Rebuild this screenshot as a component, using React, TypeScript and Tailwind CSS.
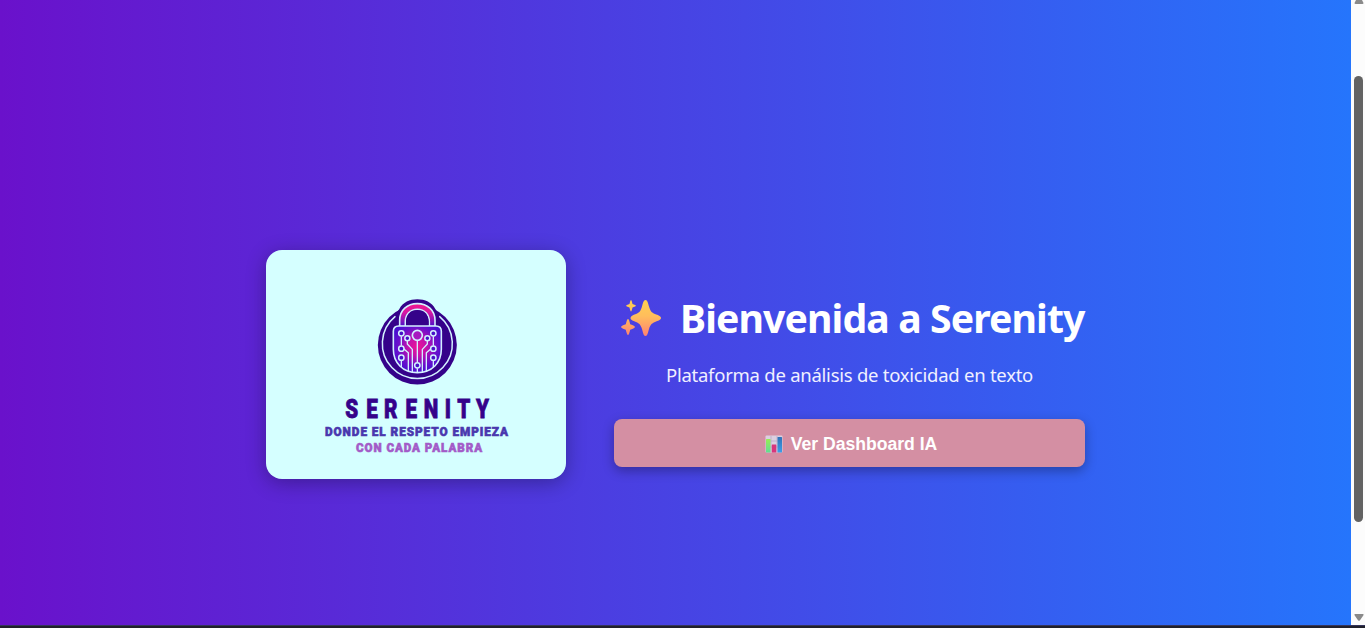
function Logo() {
  return (
    <svg viewBox="0 0 300 229" className="block h-[229px] w-[300px]" role="img" aria-label="Serenity">
      <defs>
        <radialGradient id="body" gradientUnits="userSpaceOnUse" cx="154" cy="170" r="78">
          <stop offset="0" stopColor="#ee1596" />
          <stop offset="0.35" stopColor="#c512ac" />
          <stop offset="0.75" stopColor="#6a10cc" />
          <stop offset="1" stopColor="#4a0fd0" />
        </radialGradient>
        <linearGradient id="shackle" x1="0" y1="0" x2="0" y2="1">
          <stop offset="0" stopColor="#f5178c" />
          <stop offset="0.4" stopColor="#d418a4" />
          <stop offset="1" stopColor="#4a10cc" />
        </linearGradient>
        <clipPath id="inside">
          <path d="M82 124Q82 108 98 108H210Q226 108 226 124V178C226 218 198 248 154 248S82 218 82 178Z" />
        </clipPath>
      </defs>
      <g transform="translate(100 40) scale(0.33333)" fill="none" stroke="#d3f0ff" strokeWidth="4.800" strokeLinejoin="round">
        <circle cx="154" cy="165" r="118.500" fill="#35028a" stroke="none" />
        <path d="M84 72Q95 68 100 57C111 37 131 28 154 28S197 37 208 57Q213 68 224 72V120H84Z" fill="#35028a" stroke="none" />
        <path d="M87 80A105 105 0 1 0 221 80" strokeLinecap="round" strokeWidth="4.500" />
        <path d="M101 110V91C101 60 124 41 154 41S207 60 207 91V110H190V95C190 74 176 58 154 58S118 74 118 95V110Z" fill="url(#shackle)" />
        <path d="M120 107V95C120 74 133 60 154 60S188 74 188 95V107Z" fill="#35028a" stroke="none" />
        <path d="M82 124Q82 108 98 108H210Q226 108 226 124V178C226 218 198 248 154 248S82 218 82 178Z" fill="url(#body)" />
        <g clipPath="url(#inside)" strokeWidth="4">
          <path d="M154 151V217M154 235V250M106 139V167M202 139V167" />
          <path d="M124 153V162L139 178V250M184 153V162L169 178V250" />
          <path d="M113 176L127 188V248M195 176L181 188V248M106 211V235M202 211V235" />
          <circle cx="154" cy="136" r="15" fill="#a817c0" strokeWidth="5" />
          <g fill="#4810c8" strokeWidth="4.500">
            <circle cx="106" cy="130" r="8" />
            <circle cx="202" cy="130" r="8" />
            <circle cx="124" cy="145" r="7.500" />
            <circle cx="184" cy="145" r="7.500" />
            <circle cx="106" cy="176" r="8" />
            <circle cx="202" cy="176" r="8" />
            <circle cx="106" cy="203" r="8" />
            <circle cx="202" cy="203" r="8" />
            <circle cx="154" cy="226" r="8" />
          </g>
        </g>
      </g>
      <g fontFamily="Roboto, 'Liberation Sans', sans-serif" fontWeight="900">
        <g transform="translate(79.300 167.500) scale(0.78 1)">
          <text fontSize="26.500" x="0 27 49.500 77.300 100.500 127.500 143.500 167.500" fill="#35028a" stroke="#35028a" strokeWidth="0.800">SERENITY</text>
        </g>
        <g fill="#4a37ae" stroke="#4a37ae" strokeWidth="0.600">
          <text x="59" y="186" fontSize="12.300" textLength="184" lengthAdjust="spacingAndGlyphs" letterSpacing="1">DONDE EL RESPETO EMPIEZA</text>
        </g>
        <g fill="#a35bc8" stroke="#a35bc8" strokeWidth="0.600">
          <text x="90" y="202.200" fontSize="12.300" textLength="127" lengthAdjust="spacingAndGlyphs" letterSpacing="1">CON CADA PALABRA</text>
        </g>
      </g>
    </svg>
  );
}

function Sparkles() {
  return (
    <svg viewBox="0 0 42 38" className="h-[38px] w-[42px] shrink-0" aria-hidden="true">
      <defs>
        <linearGradient id="spark" gradientUnits="userSpaceOnUse" x1="0" y1="1" x2="0" y2="37">
          <stop offset="0" stopColor="#ffd052" />
          <stop offset="0.45" stopColor="#ffbd5c" />
          <stop offset="1" stopColor="#ff8172" />
        </linearGradient>
      </defs>
      <g fill="url(#spark)">
        <path d="M25.500 1C27.500 1 28 4 29 7.500C30.300 12 31.500 13.500 35 15C38 16.200 41 17 41 19S38 21.700 35 23C31.500 24.500 30.300 26 29 30C28 33.500 27.500 37 25.500 37S23 33.500 22 30C20.700 26 19.500 24.500 16 23C13 21.700 10.500 21 10.500 19S13 16.200 16 15C19.500 13.500 20.700 12 22 7.500C23 4 23.500 1 25.500 1Z" />
        <path d="M11 1Q11.600 1 12.500 5Q16 6 16 6.800T12.500 8.600Q11.600 12.500 11 12.500T9.500 8.600Q6 7.600 6 6.800T9.500 5Q10.400 1 11 1Z" />
        <path d="M8 20Q9 20 10.200 25.200Q15 27 15 28T10.200 30.800Q9 36 8 36T5.800 30.800Q1 29 1 28T5.800 25.200Q7 20 8 20Z" />
      </g>
    </svg>
  );
}

function ChartIcon() {
  return (
    <svg viewBox="0 0 18 18" className="h-[18px] w-[18px] shrink-0" aria-hidden="true">
      <defs>
        <linearGradient id="green" x1="0" y1="0" x2="0" y2="1">
          <stop offset="0" stopColor="#98ed54" />
          <stop offset="1" stopColor="#62dc94" />
        </linearGradient>
        <linearGradient id="blue" x1="0" y1="0" x2="0" y2="1">
          <stop offset="0" stopColor="#2f72b8" />
          <stop offset="1" stopColor="#3e9ee8" />
        </linearGradient>
      </defs>
      <rect x="0.500" y="0.500" width="17" height="17" rx="1" fill="#dccfe0" />
      <path d="M6 1V17M12 1V17M1 6H17M1 12H17" stroke="#bbaac8" strokeWidth="0.800" />
      <rect x="1" y="4" width="4.500" height="13.500" rx="0.500" fill="url(#green)" />
      <rect x="6.800" y="9.500" width="4.500" height="8" rx="0.500" fill="#d8367c" />
      <rect x="12.500" y="2" width="4.500" height="15.500" rx="0.500" fill="url(#blue)" />
    </svg>
  );
}

function Scrollbar() {
  return (
    <div className="flex h-full w-[14px] shrink-0 flex-col items-center bg-[#fcfcfc]">
      <svg viewBox="0 0 10 4" className="ml-px h-1 w-[10px]" aria-hidden="true">
        <path d="M2 0H8L9.500 3Q9.500 4 8.500 4H1.500Q.5 4 .5 3Z" fill="#8a8a8a" />
      </svg>
      <div className="mt-[72px] ml-px h-[446px] w-[9px] rounded-full bg-[#636363]" />
      <svg viewBox="0 0 10 7" className="mt-auto mb-1 ml-px h-[7px] w-[10px]" aria-hidden="true">
        <path d="M1 0H9Q10 .5 9.300 1.500L6 6.300Q5 7.300 4 6.300L.7 1.500Q0 .5 1 0Z" fill="#8a8a8a" />
      </svg>
    </div>
  );
}

export default function App() {
  return (
    <div className="flex h-[628px] w-full flex-col overflow-hidden bg-[#20202c]">
      <div className="flex h-[625px] w-full shrink-0">
        <main className="flex min-w-0 flex-1 items-center justify-center gap-12 bg-[linear-gradient(to_right,#6a11cb,#2575fc)] pt-[104px]">
          <div className="overflow-hidden rounded-2xl bg-[#d5ffff] shadow-[0_4px_20px_rgba(0,0,0,0.3)]">
            <Logo />
          </div>
          <section className="flex h-[205px] w-[471px] flex-col items-center">
            <h1 className="mt-[29px] flex h-[54px] w-full items-center pl-[6px] font-['Noto_Sans','Open_Sans',sans-serif] text-[39.200px] leading-[54px] font-bold text-white">
              <Sparkles />
              <span className="ml-[18px] tracking-[-0.900px] whitespace-nowrap">Bienvenida a Serenity</span>
            </h1>
            <p className="mt-[17px] h-[26px] font-['Noto_Sans','Open_Sans',sans-serif] text-[18.500px] leading-[26px] tracking-[-0.25px] whitespace-nowrap text-[#f0f0ff]">
              Plataforma de análisis de toxicidad en texto
            </p>
            <button className="mt-auto flex h-12 w-full shrink-0 items-center justify-center gap-[8px] rounded-lg bg-[#d48fa3] pt-px pl-[3px] font-['Liberation_Sans',Arial,sans-serif] text-[17.600px] font-bold text-white shadow-[0_4px_12px_rgba(0,0,0,0.3)]">
              <ChartIcon />
              <span className="pt-[2px]">Ver Dashboard IA</span>
            </button>
          </section>
        </main>
        <Scrollbar />
      </div>
      <div className="h-px w-full shrink-0 bg-[#35355c]" />
    </div>
  );
}
